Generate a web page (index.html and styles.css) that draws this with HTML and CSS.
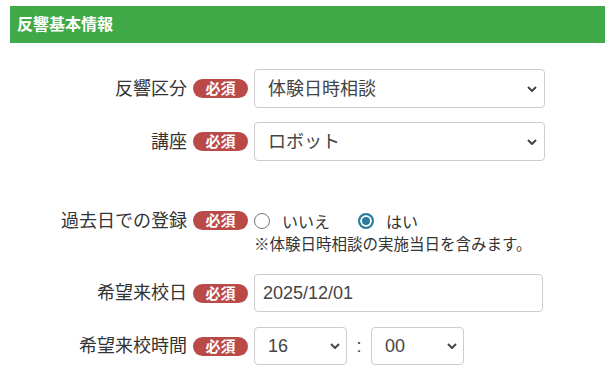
FILE: index.html
```html
<!DOCTYPE html>
<html lang="ja">
<head>
  <meta charset="UTF-8" />
  <meta name="viewport" content="width=device-width, initial-scale=1.0"/>
  <title>反響基本情報</title>
  <link rel="stylesheet" href="styles.css">
</head>
<body>

  <div class="panel">
    <div class="panel-head">反響基本情報</div>

    <div class="form">
      <div class="row">
        <label class="row-label">反響区分</label>
        <span class="req">必須</span>
        <div class="select-wrap wide">
          <select>
            <option>体験日時相談</option>
          </select>
          <svg class="chevron" viewBox="0 0 10 6"><path d="M1 1 L5 5 L9 1" /></svg>
        </div>
      </div>

      <div class="row gap-sm">
        <label class="row-label">講座</label>
        <span class="req">必須</span>
        <div class="select-wrap wide">
          <select>
            <option>ロボット</option>
          </select>
          <svg class="chevron" viewBox="0 0 10 6"><path d="M1 1 L5 5 L9 1" /></svg>
        </div>
      </div>

      <div class="row row-top gap-lg">
        <label class="row-label">過去日での登録</label>
        <span class="req">必須</span>
        <div class="field">
          <div class="radios">
            <label class="radio"><input type="radio" name="past"> いいえ</label>
            <label class="radio"><input type="radio" name="past" checked> はい</label>
          </div>
          <p class="note">※体験日時相談の実施当日を含みます。</p>
        </div>
      </div>

      <div class="row gap-md">
        <label class="row-label">希望来校日</label>
        <span class="req">必須</span>
        <input class="text-input" type="text" value="2025/12/01">
      </div>

      <div class="row gap-sm2">
        <label class="row-label">希望来校時間</label>
        <span class="req">必須</span>
        <div class="select-wrap small">
          <select>
            <option>16</option>
          </select>
          <svg class="chevron" viewBox="0 0 10 6"><path d="M1 1 L5 5 L9 1" /></svg>
        </div>
        <span class="colon">:</span>
        <div class="select-wrap small">
          <select>
            <option>00</option>
          </select>
          <svg class="chevron" viewBox="0 0 10 6"><path d="M1 1 L5 5 L9 1" /></svg>
        </div>
      </div>
    </div>
  </div>

</body>
</html>
```

FILE: styles.css
```css
* {
  box-sizing: border-box;
  margin: 0;
  padding: 0;
}

body {
  background: #fff;
  color: #333;
  font-family: "Liberation Sans", "Noto Sans CJK JP", sans-serif;
  font-size: 18px;
}

.panel {
  padding-top: 6px;
}

.panel-head {
  margin-left: 10px;
  height: 37px;
  padding-left: 7px;
  background: #40aa48;
  color: #fff;
  font-size: 16px;
  font-weight: bold;
  line-height: 37px;
}

.form {
  padding-top: 26px;
}

.row {
  display: flex;
  align-items: center;
  gap: 6px;
}

.row.gap-sm {
  margin-top: 14px;
}

.row.gap-lg {
  margin-top: 47px;
}

.row.gap-md {
  margin-top: 18px;
}

.row.gap-sm2 {
  margin-top: 15px;
}

.row.row-top {
  align-items: flex-start;
}

.row-label {
  flex: none;
  width: 187px;
  text-align: right;
  line-height: 26px;
}

.req {
  flex: none;
  width: 55px;
  height: 19px;
  border-radius: 10px;
  background: #b94a48;
  color: #fff;
  font-size: 15px;
  font-weight: bold;
  line-height: 19px;
  text-align: center;
}

.row-top .req {
  margin-top: 3px;
}

.select-wrap {
  position: relative;
  flex: none;
}

.select-wrap.wide {
  width: 291px;
}

.select-wrap.small {
  width: 93px;
}

.select-wrap select {
  appearance: none;
  -webkit-appearance: none;
  width: 100%;
  height: 39px;
  padding: 0 28px 0 13px;
  border: 1px solid #ccc;
  border-radius: 4px;
  background: #fff;
  color: #444;
  font: inherit;
}

.select-wrap.small select {
  height: 38px;
}

.chevron {
  position: absolute;
  top: 50%;
  right: 8px;
  width: 10px;
  height: 6px;
  margin-top: -3px;
  fill: none;
  stroke: #444;
  stroke-width: 2;
  pointer-events: none;
}

.small .chevron {
  right: 7px;
}

.field {
  display: flex;
  flex-direction: column;
}

.radios {
  display: flex;
  align-items: center;
  gap: 28px;
  height: 26px;
  font-size: 16px;
}

.radio {
  display: flex;
  align-items: center;
  gap: 12px;
}

.radio input {
  appearance: none;
  -webkit-appearance: none;
  width: 16px;
  height: 16px;
  border: 1.5px solid #777;
  border-radius: 50%;
  background: #fff;
  margin: 0;
}

.radio input:checked {
  border: 2px solid #2b7d9c;
  background: #2b7d9c;
  box-shadow: inset 0 0 0 2px #fff;
}

.note {
  font-size: 15.5px;
  line-height: 22px;
}

.text-input {
  flex: none;
  width: 289px;
  height: 38px;
  padding: 0 8px;
  border: 1px solid #ccc;
  border-radius: 4px;
  color: #444;
  font: inherit;
}

.colon {
  margin: 0 3.5px;
  line-height: 32px;
  color: #444;
}
```
